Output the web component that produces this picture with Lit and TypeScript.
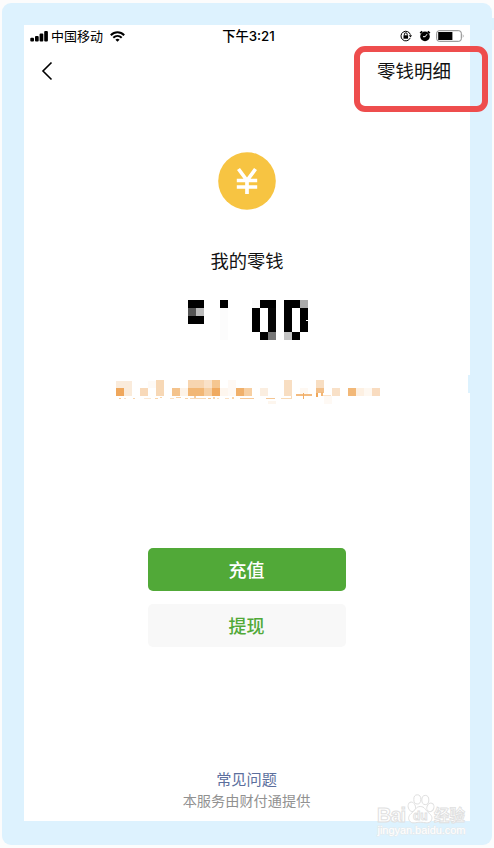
import { LitElement, html, svg, css } from "lit";
import { customElement } from "lit/decorators.js";

type Cell = [x: number, y: number, w: number, h: number, fill: string];

// Masked balance, in a 124 x 40 box of 8px cells
const BALANCE: Cell[] = [
  [0, 0, 16, 8, "#000"], [0, 8, 8, 8, "#555"], [8, 8, 8, 8, "#bbb"], [0, 16, 16, 8, "#000"],
  [32, 0, 8, 8, "#000"], [32, 8, 8, 32, "#fcfcfc"],
  [64, 0, 8, 8, "#fafafa"], [64, 8, 8, 24, "#000"], [72, 0, 16, 8, "#000"],
  [80, 8, 8, 24, "#050505"], [72, 32, 8, 8, "#000"], [80, 32, 8, 8, "#777"],
  [96, 0, 16, 8, "#000"], [112, 0, 8, 8, "#aaa"], [96, 8, 8, 24, "#000"], [112, 8, 8, 24, "#000"],
  [96, 32, 8, 8, "#c4c4c4"], [104, 32, 8, 8, "#000"], [118, 20, 3, 1, "#fff"],
];

// Masked promotion line, in a 268 x 24 box
const PROMO: Cell[] = [
  [0, 1, 16, 7, "#faebdb"], [0, 8, 8, 8, "#efa75c"], [8, 8, 8, 8, "#faebda"],
  [24, 8, 8, 8, "#f8d9b9"], [32, 1, 8, 7, "#fefaf6"], [40, 0, 8, 16, "#f7d8b6"],
  [56, 8, 8, 8, "#f4c38c"], [64, 8, 8, 8, "#fdf3e8"],
  [72, 0, 16, 8, "#f7d5b0"], [88, 0, 8, 8, "#f9e1c8"], [96, 0, 8, 8, "#f5c690"],
  [72, 8, 16, 8, "#f2b775"], [88, 8, 8, 8, "#f6d0a5"], [96, 8, 8, 8, "#f0aa60"],
  [104, 8, 8, 8, "#fef6ee"], [112, 0, 8, 16, "#fef9f5"],
  [120, 8, 8, 8, "#f0b06b"], [128, 8, 8, 8, "#f7cfa2"], [144, 8, 8, 8, "#fbeee0"],
  [168, 0, 8, 16, "#f8dec2"], [184, 8, 8, 6, "#fef8f2"],
  [200, 0, 8, 8, "#f8dec2"], [200, 8, 8, 5, "#f3c08a"], [216, 8, 8, 8, "#f9e1c8"],
  [232, 8, 8, 8, "#f2b878"], [240, 8, 8, 8, "#fdf0e2"], [248, 8, 8, 8, "#fef8f1"], [256, 8, 8, 8, "#f9dcc0"],
  [3, 18, 2, 1, "#f6c896"], [8, 18, 2, 1, "#fae0c4"], [17, 18, 2, 1, "#f8d3a9"], [28, 18, 7, 1, "#fbe8d4"],
  [39, 18, 3, 1, "#f8d3a9"], [44, 17, 2, 1, "#f8d3a9"], [54, 18, 4, 1, "#fadfc1"], [60, 17, 5, 1, "#f8d3a9"],
  [69, 18, 3, 1, "#f8d3a9"], [74, 18, 16, 1, "#f8d9b5"], [78, 16, 2, 2, "#f6cda0"], [92, 18, 3, 1, "#f6c896"],
  [97, 17, 2, 2, "#f8d3a9"], [101, 18, 2, 1, "#fae0c4"], [109, 18, 4, 1, "#fae0c4"],
  [116, 17, 2, 2, "#f8d3a9"], [124, 18, 14, 1, "#f6c896"],
  [150, 18, 9, 1, "#f4c592"], [152, 21, 8, 3, "#fdf6ee"],
  [165, 18, 11, 1, "#f8d9b5"], [175, 16, 1, 2, "#f8d9b5"],
  [180, 14, 16, 2, "#f3bb7f"], [187, 13, 1, 6, "#f1ac63"],
  [200, 13, 2, 4, "#f0a75a"], [205, 12, 2, 4, "#f3b675"], [207, 15, 8, 1, "#fbe3ca"],
  [208, 16, 8, 8, "#fef9f4"],
];

const cells = (list: Cell[]) =>
  list.map(([x, y, w, h, f]) => svg`<rect x=${x} y=${y} width=${w} height=${h} fill=${f}></rect>`);

@customElement("status-bar")
class StatusBar extends LitElement {
  static styles = css`
    :host { display: grid; grid-template-columns: 1fr auto 1fr; align-items: center; height: 22px; padding: 0 5px 0 6px;
      font-size: 13px; line-height: 22px; color: #000; }
    .side { display: flex; align-items: center; }
    .right { justify-content: flex-end; }
    .carrier { margin: 0 7px 0 3px; }
    .time { margin-left: 2px; font-size: 13.3px; font-weight: 500; font-family: Inter, "Noto Sans CJK SC", sans-serif; }
    .lock { margin-right: 7px; }
    .alarm { margin-right: 5px; }
    svg { display: block; }
  `;
  render() {
    return html`
      <div class="side">
        <svg width="18" height="12" viewBox="0 0 18 12">
          <rect x="0.3" y="7.700" width="3.7" height="3.8" rx="1"></rect>
          <rect x="5" y="6" width="3.7" height="5.5" rx="1"></rect>
          <rect x="9.600" y="3.5" width="3.7" height="8" rx="1"></rect>
          <rect x="14.200" y="1" width="3.7" height="10.5" rx="1"></rect>
        </svg>
        <span class="carrier">中国移动</span>
        <svg width="15" height="11" viewBox="0 0 15 11" fill="none" stroke="#000" stroke-width="2">
          <path d="M0.8 4.2C4.6 .3 10.4 .3 14.2 4.2"></path>
          <path d="M3.3 6.8C5.8 4.4 9.2 4.4 11.7 6.8"></path>
          <path d="M5.4 8.7Q7.5 7 9.6 8.7L7.5 10.8Z" fill="#000" stroke="none"></path>
        </svg>
      </div>
      <span class="time">下午3:21</span>
      <div class="side right">
        <svg class="lock" width="12" height="12" viewBox="0 0 12 12" fill="none" stroke="#000">
          <path d="M10.200 8A4.800 4.800 0 1 1 10.400 4.700"></path>
          <path d="M8.800 5.2H12L10.5 7.4Z" fill="#000" stroke="none"></path>
          <rect x="3.5" y="5.3" width="4.6" height="3.4" fill="#000" stroke="none"></rect>
          <path d="M4.4 5.5V4.2a1.4 1.4 0 0 1 2.8 0V5.5"></path>
        </svg>
        <svg class="alarm" width="12" height="12" viewBox="0 0 12 12">
          <circle cx="6" cy="6.4" r="4.8"></circle>
          <path d="M1.2 3.2L3.2 1.3M8.8 1.3L10.8 3.2" stroke="#000" stroke-width="1.7"></path>
          <path d="M8 4.200L6.2 6.7H4" fill="none" stroke="#fff"></path>
        </svg>
        <svg width="29" height="12" viewBox="0 0 29 12">
          <rect x="0.7" y="0.7" width="24.6" height="10.6" rx="2.5" fill="#fff" stroke="#888"></rect>
          <rect x="2.2" y="2" width="14.2" height="8"></rect>
          <path d="M26.8 4Q28.4 6 26.8 8Z" fill="#888"></path>
        </svg>
      </div>
    `;
  }
}

@customElement("site-watermark")
class SiteWatermark extends LitElement {
  static styles = css`
    :host { display: block; width: 92px; height: 46px; }
    svg { display: block; overflow: visible; font-family: "Liberation Sans", "Noto Sans CJK SC", sans-serif; }
  `;
  render() {
    return html`
      <svg width="92" height="46" viewBox="0 0 92 46">
        <g fill="#fff" stroke="#e0e0e0" stroke-width="1">
          <text x="0" y="28" font-size="20" font-weight="bold" textLength="29">Bai</text>
          <ellipse cx="34.8" cy="12.8" rx="3.6" ry="4.8" transform="rotate(-18 34.8 12.8)"></ellipse>
          <ellipse cx="40.3" cy="5.4" rx="3.5" ry="4.6"></ellipse>
          <ellipse cx="48.3" cy="6" rx="3.5" ry="4.6"></ellipse>
          <ellipse cx="53.4" cy="13.4" rx="3.5" ry="4.4" transform="rotate(18 53.4 13.4)"></ellipse>
          <path d="M43.3 12.5c-4.500 0-5.300 4-8 6-3.500 2.700-4.600 5.500-2.800 8.300 2.500 3.600 6.500 1.400 10.800 1.400s8.300 2.200 10.800-1.400c1.800-2.800.7-5.600-2.800-8.300-2.700-2-3.500-6-8-6Z"></path>
          <text x="36" y="26" font-size="12" font-weight="bold" stroke-width="0.9">du</text>
          <text x="57" y="27" font-size="16" font-weight="bold" textLength="31" lengthAdjust="spacingAndGlyphs" stroke-width="0.9">经验</text>
        </g>
        <text x="0.5" y="40" font-size="11" textLength="88" fill="#fff" stroke="#e6eaec" stroke-width="1.200" paint-order="stroke">jingyan.baidu.com</text>
      </svg>
    `;
  }
}

@customElement("app-root")
class AppRoot extends LitElement {
  static styles = css`
    :host { display: block; position: relative; width: 494px; height: 848px; box-sizing: border-box; overflow: hidden;
      padding: 3px 2px; background: #fcfcfc; font-family: "Noto Sans CJK SC", sans-serif; }
    .frame { height: 842px; box-sizing: border-box; padding: 22px; background: #ddf2fe; border-radius: 9px; }
    .screen { width: 446px; height: 796px; background: #fff; display: flex; flex-direction: column; align-items: center; }
    status-bar { align-self: stretch; }
    .nav { align-self: stretch; display: flex; justify-content: space-between; align-items: center; height: 48px;
      padding: 0 19px 0 17px; font-size: 18.5px; color: #111; }
    .nav span { padding-bottom: 2px; }
    svg { display: block; }
    .coin { margin-top: 57px; }
    .label { margin-top: 37px; font-size: 18.3px; line-height: 27px; color: #111; }
    .balance { margin: 26px 0 0 6px; }
    .promo { margin: 40px 0 0 5px; }
    .btn { width: 198px; height: 43px; border-radius: 5px; display: flex; align-items: center; justify-content: center;
      box-sizing: border-box; padding: 0 1px 2px 0; font-size: 18px; font-weight: 500; }
    .topup { margin-top: 144px; background: #51a938; color: #fff; }
    .withdraw { margin-top: 13px; background: #f8f8f8; color: #51a938; }
    .faq { margin: 119px 1px 0 0; font-size: 15.2px; line-height: 24px; color: #5c6f9d; }
    .note { margin-right: 1px; font-size: 14.2px; line-height: 20px; color: #919191; }
    .marker { position: absolute; left: 354px; top: 46px; width: 134px; height: 66px; box-sizing: border-box;
      border: 6px solid #ee4d4d; border-radius: 11px; }
    .notch { position: absolute; left: 492px; top: 18px; width: 2px; height: 12px; background: #ddf2fe; }
    .handle { position: absolute; left: 468px; top: 375px; width: 2px; height: 18px; background: #ddf2fe; }
    site-watermark { position: absolute; left: 377px; top: 794px; }
  `;
  render() {
    return html`
      <div class="frame">
        <main class="screen">
          <status-bar></status-bar>
          <nav class="nav">
            <svg width="12" height="20" viewBox="0 0 12 20"><path d="M10.500 1.500L2 10L10.500 18.500" fill="none" stroke="#000" stroke-width="1.600"></path></svg>
            <span>零钱明细</span>
          </nav>
          <svg class="coin" width="58" height="58" viewBox="0 0 58 58">
            <circle cx="29" cy="29" r="28.800" fill="#f7c442"></circle>
            <path d="M20.500 17L29 28.500L37.500 17M18.800 28.500H39.200M18.800 35H39.200M29 28V42" fill="none" stroke="#fff" stroke-width="3.700"></path>
          </svg>
          <div class="label">我的零钱</div>
          <svg class="balance" width="124" height="40" shape-rendering="crispEdges">${cells(BALANCE)}</svg>
          <svg class="promo" width="268" height="24" shape-rendering="crispEdges">${cells(PROMO)}</svg>
          <div class="btn topup">充值</div>
          <div class="btn withdraw">提现</div>
          <div class="faq">常见问题</div>
          <div class="note">本服务由财付通提供</div>
        </main>
      </div>
      <div class="notch"></div>
      <div class="handle"></div>
      <div class="marker"></div>
      <site-watermark></site-watermark>
    `;
  }
}
